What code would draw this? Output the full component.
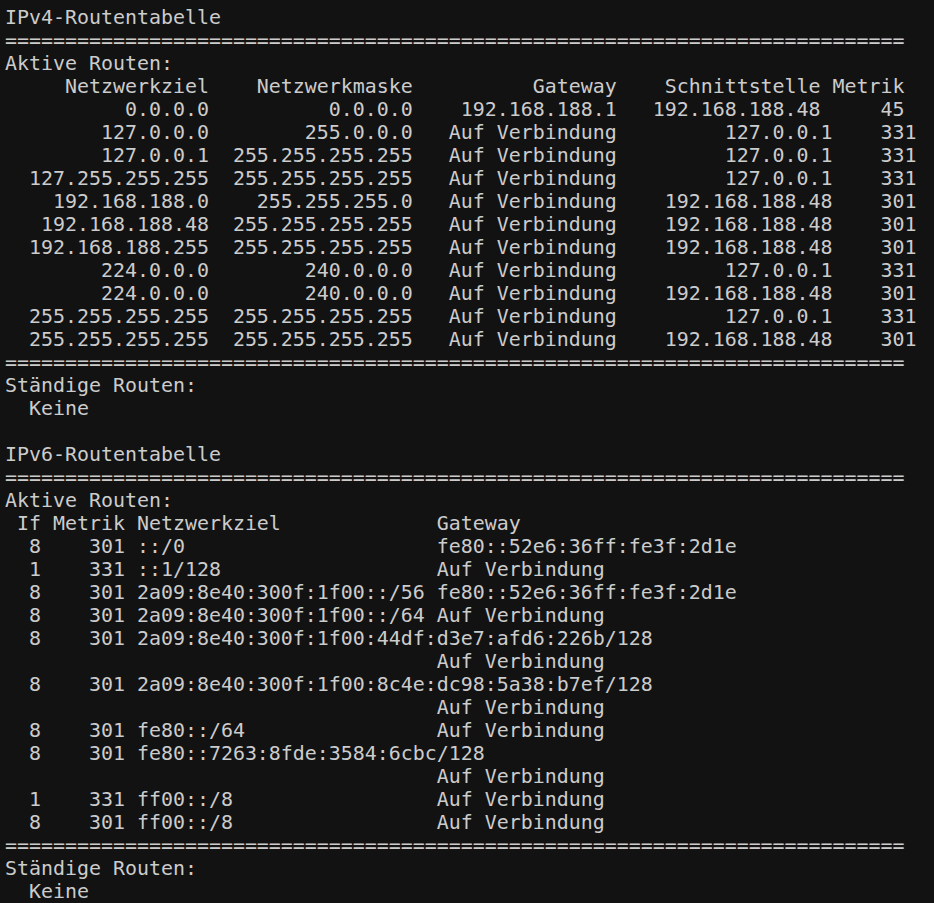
import React from "react";

const ipv4Routes: [string, string, string, string, string][] = [
  ["0.0.0.0", "0.0.0.0", "192.168.188.1", "192.168.188.48", "45"],
  ["127.0.0.0", "255.0.0.0", "Auf Verbindung", "127.0.0.1", "331"],
  ["127.0.0.1", "255.255.255.255", "Auf Verbindung", "127.0.0.1", "331"],
  ["127.255.255.255", "255.255.255.255", "Auf Verbindung", "127.0.0.1", "331"],
  ["192.168.188.0", "255.255.255.0", "Auf Verbindung", "192.168.188.48", "301"],
  ["192.168.188.48", "255.255.255.255", "Auf Verbindung", "192.168.188.48", "301"],
  ["192.168.188.255", "255.255.255.255", "Auf Verbindung", "192.168.188.48", "301"],
  ["224.0.0.0", "240.0.0.0", "Auf Verbindung", "127.0.0.1", "331"],
  ["224.0.0.0", "240.0.0.0", "Auf Verbindung", "192.168.188.48", "301"],
  ["255.255.255.255", "255.255.255.255", "Auf Verbindung", "127.0.0.1", "331"],
  ["255.255.255.255", "255.255.255.255", "Auf Verbindung", "192.168.188.48", "301"],
];

const ipv6Routes: [string, string, string, string][] = [
  ["8", "301", "::/0", "fe80::52e6:36ff:fe3f:2d1e"],
  ["1", "331", "::1/128", "Auf Verbindung"],
  ["8", "301", "2a09:8e40:300f:1f00::/56", "fe80::52e6:36ff:fe3f:2d1e"],
  ["8", "301", "2a09:8e40:300f:1f00::/64", "Auf Verbindung"],
  ["8", "301", "2a09:8e40:300f:1f00:44df:d3e7:afd6:226b/128", "Auf Verbindung"],
  ["8", "301", "2a09:8e40:300f:1f00:8c4e:dc98:5a38:b7ef/128", "Auf Verbindung"],
  ["8", "301", "fe80::/64", "Auf Verbindung"],
  ["8", "301", "fe80::7263:8fde:3584:6cbc/128", "Auf Verbindung"],
  ["1", "331", "ff00::/8", "Auf Verbindung"],
  ["8", "301", "ff00::/8", "Auf Verbindung"],
];

const rule = "=".repeat(75);

function buildLines(): string[] {
  const out: string[] = [];
  out.push("IPv4-Routentabelle");
  out.push(rule);
  out.push("Aktive Routen:");
  out.push("     Netzwerkziel    Netzwerkmaske          Gateway    Schnittstelle Metrik");
  ipv4Routes.forEach(([dest, mask, gw, itf, metric], i) => {
    // the default route row is one column shorter at the end (route print quirk)
    const tail = i === 0 ? itf.padStart(17) + metric.padStart(7) : itf.padStart(18) + metric.padStart(7);
    out.push(dest.padStart(17) + mask.padStart(17) + gw.padStart(17) + tail);
  });
  out.push(rule);
  out.push("Ständige Routen:");
  out.push("  Keine");
  out.push("");
  out.push("IPv6-Routentabelle");
  out.push(rule);
  out.push("Aktive Routen:");
  out.push(" If Metrik " + "Netzwerkziel".padEnd(25) + "Gateway");
  ipv6Routes.forEach(([itf, metric, dest, gw]) => {
    const head = itf.padStart(3) + metric.padStart(7) + " ";
    if (dest.length > 24) {
      out.push(head + dest);
      out.push(" ".repeat(36) + gw);
    } else {
      out.push(head + dest.padEnd(24) + " " + gw);
    }
  });
  out.push(rule);
  out.push("Ständige Routen:");
  out.push("  Keine");
  return out;
}

const App = () => {
  const lines = buildLines();

  return (
    <div className="w-[934px] h-[903px] overflow-hidden bg-[#121212] text-[#cccccc] pl-[5px] pt-[6px] font-['DejaVu_Sans_Mono',monospace] text-[19.93px]">
      {lines.map((line, i) => (
        <div key={i} className="h-[23px] leading-[23px] whitespace-pre">
          {line}
        </div>
      ))}
    </div>
  );
};

export default App;
